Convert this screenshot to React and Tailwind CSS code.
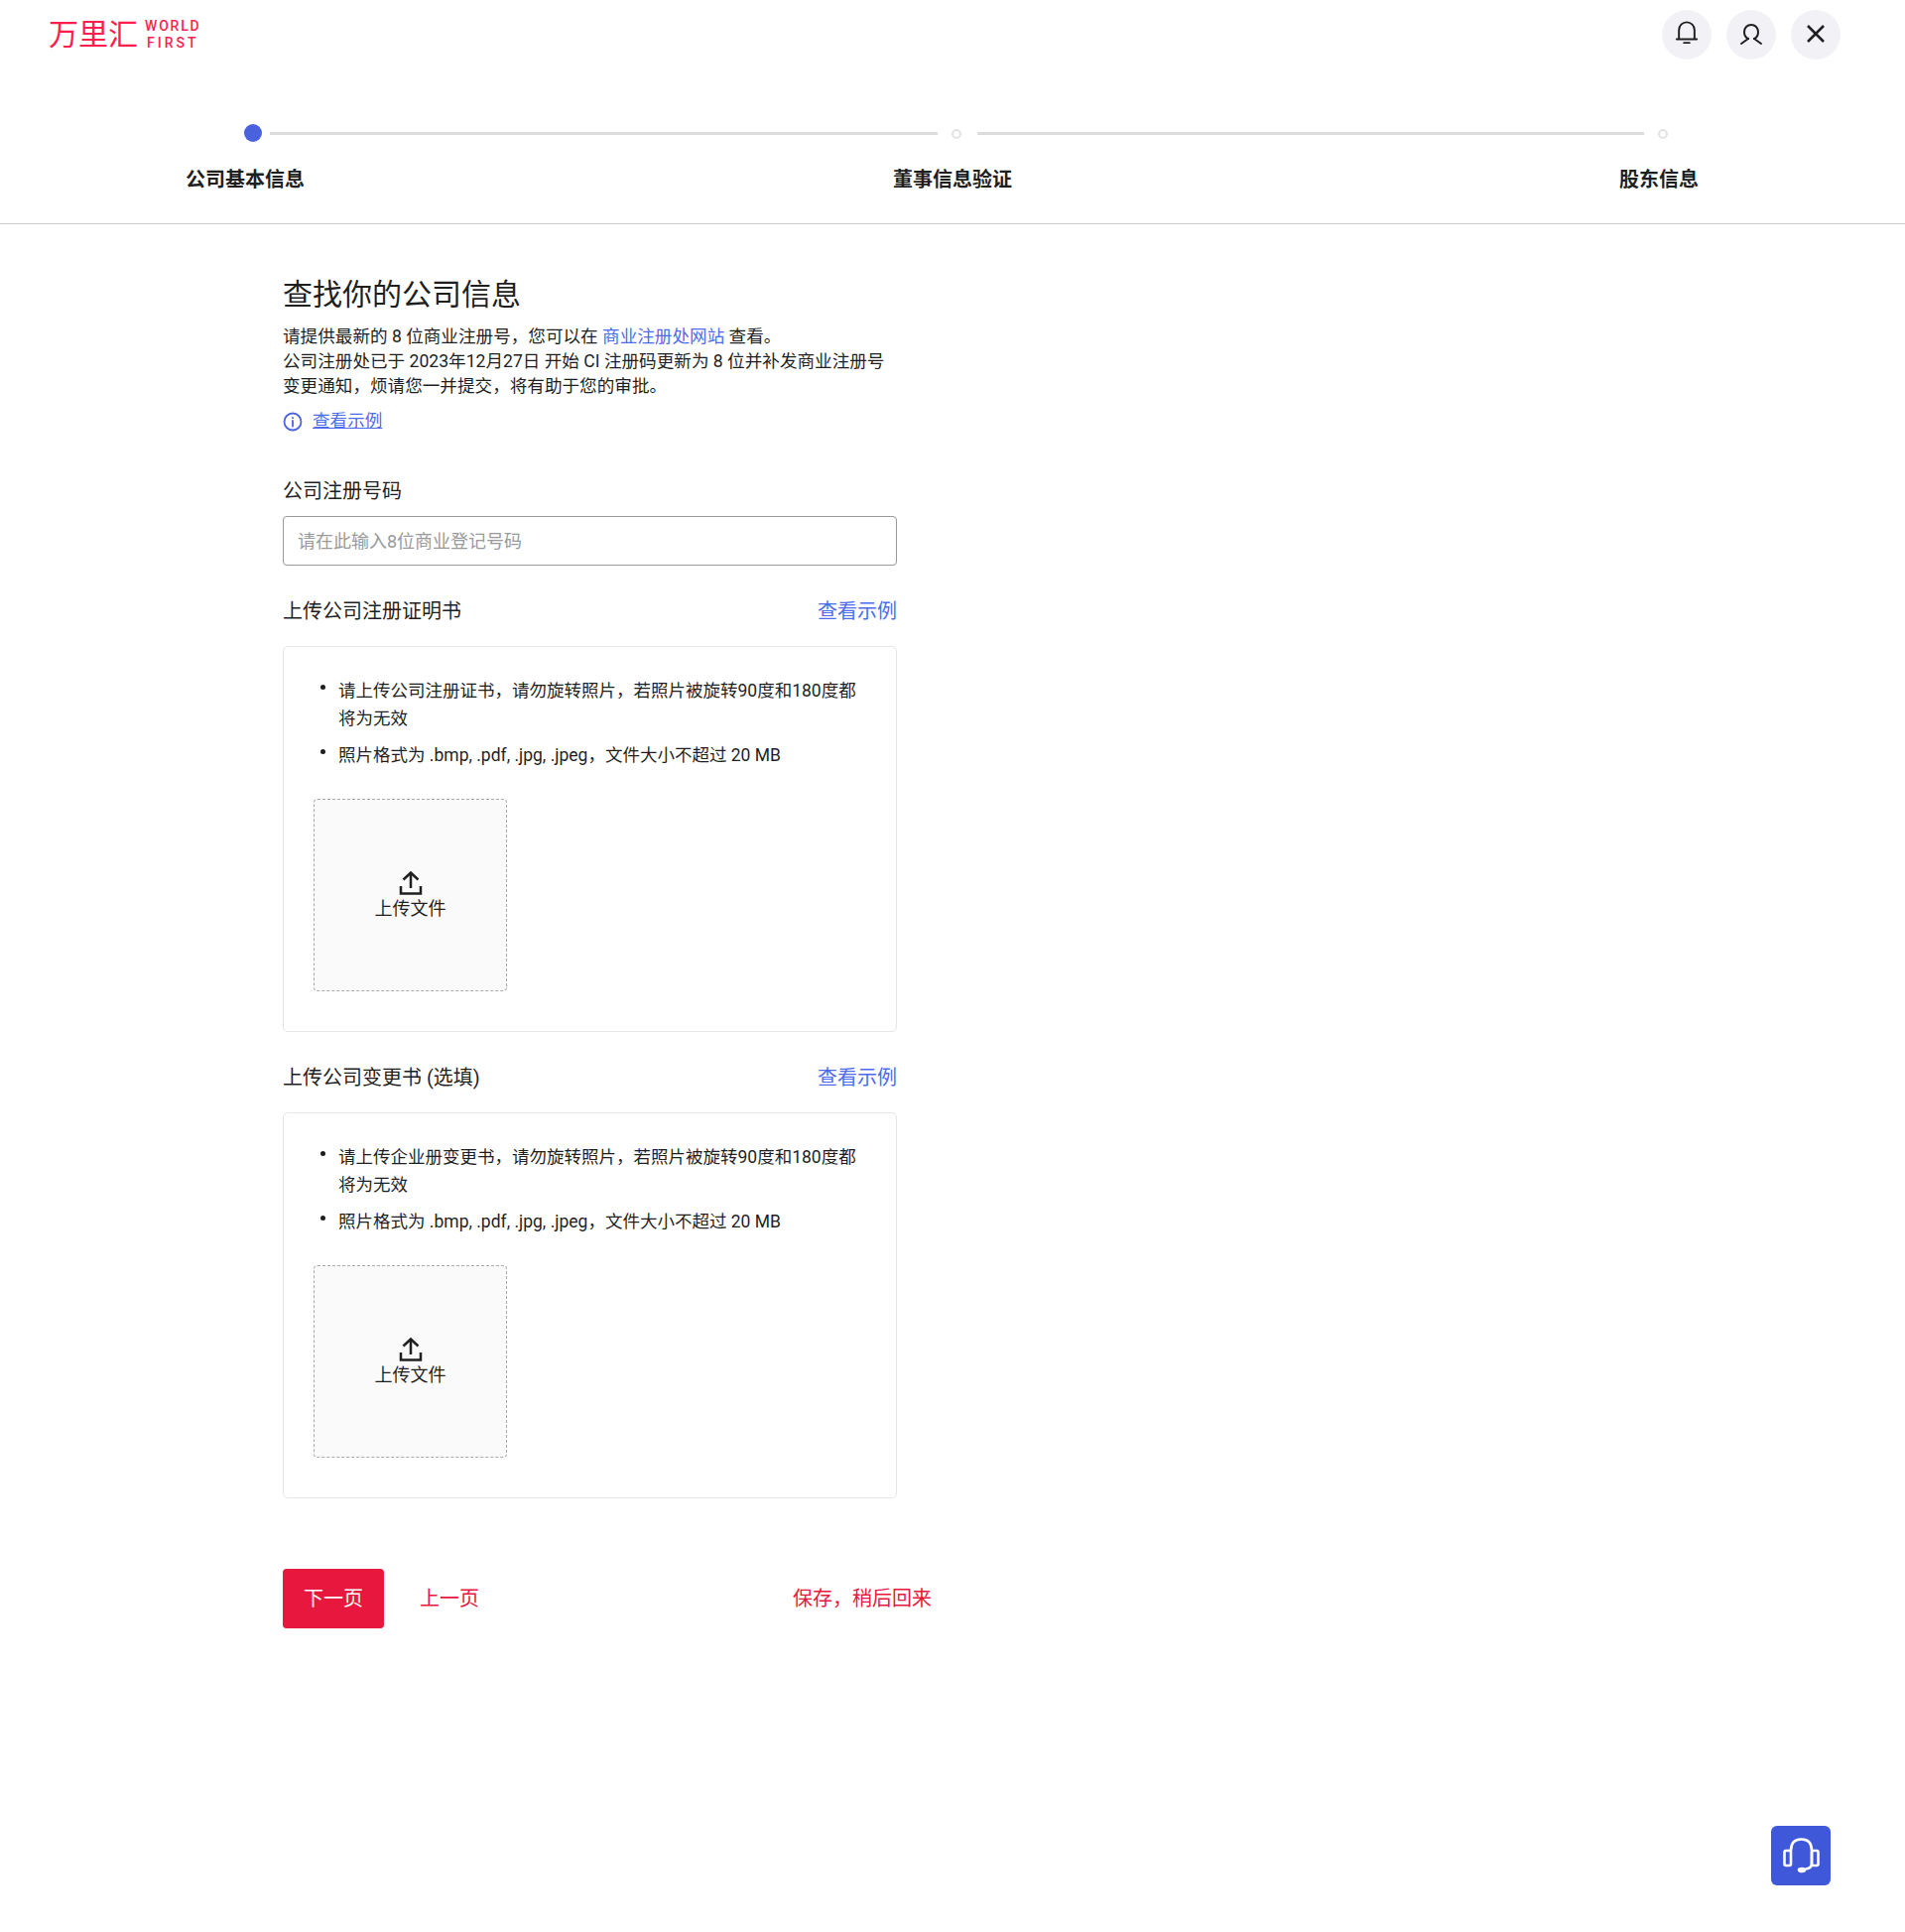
const FONT = "font-['Roboto','Noto_Sans_CJK_SC',sans-serif]";

function BellIcon() {
  return (
    <svg className="mb-[4px]" width="24" height="26" viewBox="0 0 26 28" fill="none" stroke="#1f1f1f" strokeWidth="2.100" strokeLinecap="round" strokeLinejoin="round">
      <path d="M4.500 20V11a8.500 8.500 0 0 1 17 0v9" />
      <path d="M2 21h22" />
      <path d="M10 25h6" />
    </svg>
  );
}

function UserIcon() {
  return (
    <svg width="24" height="24" viewBox="0 0 24 24" fill="none" stroke="#1f1f1f" strokeWidth="2" strokeLinecap="round" strokeLinejoin="round">
      <path d="M9 16c-2.500-1.200-4-3.700-4-6.800C5 5 8 2 12 2s7 3 7 7.200c0 3.100-1.500 5.600-4 6.800" />
      <path d="M9 16 2 21" />
      <path d="M15 16 22 21" />
    </svg>
  );
}

function CloseIcon() {
  return (
    <svg className="mb-[2px]" width="18" height="18" viewBox="0 0 18 18" fill="none" stroke="#1f1f1f" strokeWidth="2.500">
      <path d="M1 1l16 16" />
      <path d="M17 1 1 17" />
    </svg>
  );
}

function InfoIcon() {
  return (
    <svg width="20" height="20" viewBox="0 0 20 20" fill="none" stroke="#4a63e0" strokeWidth="1.800" strokeLinecap="round">
      <circle cx="10" cy="10" r="8.500" />
      <path d="M10 9v5.500" />
      <path d="M10 5.800v.4" />
    </svg>
  );
}

function UploadIcon() {
  return (
    <svg width="26" height="26" viewBox="0 0 26 26" fill="none" stroke="#1f1f1f" strokeWidth="2.500">
      <path d="M13 18V2.500" />
      <path d="M5.500 9.500 13 2.500l7.500 7" />
      <path d="M3 16v7.500h20V16" />
    </svg>
  );
}

function HeadsetIcon() {
  return (
    <svg width="37" height="37" viewBox="0 0 37 37" fill="none" stroke="#fff" strokeWidth="2.600" strokeLinecap="round" strokeLinejoin="round">
      <path d="M8 13C8 5 12 1.500 18.500 1.500S29 5 29 13v13c0 3-2 5-6 5.500" />
      <rect x="1.500" y="13" width="6.500" height="15" rx="1.500" />
      <rect x="29" y="13" width="6.500" height="15" rx="1.500" />
      <ellipse cx="19" cy="32.500" rx="3" ry="1.500" fill="#fff" />
    </svg>
  );
}

function RoundButton({ children }) {
  return (
    <button className="flex h-[50px] w-[50px] items-center justify-center rounded-full bg-[#f2f2f6]">
      {children}
    </button>
  );
}

function UploadCard({ lines }) {
  return (
    <div className="mt-[21px] h-[389px] rounded-[5px] border border-[#e6e6e6] px-[30px] pt-[30px]">
      <ul className="flex flex-col gap-[9px] pl-[7px] text-[17.5px] leading-[28px] text-[#1f1f1f]">
        {lines.map((line) => (
          <li key={line} className="flex gap-[13px]">
            <span className="mt-[8px] h-[5px] w-[5px] shrink-0 rounded-full bg-[#1f1f1f]" />
            <span>{line}</span>
          </li>
        ))}
      </ul>
      <div className="mt-[30px] flex h-[194px] w-[195px] flex-col items-center justify-center rounded-[4px] border border-dashed border-[#aaaaaa] bg-[#fafafa]">
        <UploadIcon />
        <span className="pt-[1px] text-[18px] leading-[24px] text-[#1f1f1f]">上传文件</span>
      </div>
    </div>
  );
}

function SectionHead({ title }) {
  return (
    <div className="mt-[32px] flex items-center justify-between text-[20px] leading-[28px]">
      <span className="text-[#1f1f1f]">{title}</span>
      <a className="text-[#4f6bed]">查看示例</a>
    </div>
  );
}

export default function App() {
  return (
    <div className={`relative min-h-[1947px] bg-white ${FONT}`}>
      <header className="flex h-[70px] items-center justify-between pl-[49px] pr-[65px]">
        <div className="flex items-center gap-[7px] text-[#ff1f4f]">
          <span className="text-[30px] leading-[34px]">万里汇</span>
          <span className="flex flex-col items-center text-[14px] font-medium leading-[17px]">
            <span className="tracking-[1.800px]">WORLD</span>
            <span className="tracking-[3px]">FIRST</span>
          </span>
        </div>
        <div className="flex gap-[15px]">
          <RoundButton><BellIcon /></RoundButton>
          <RoundButton><UserIcon /></RoundButton>
          <RoundButton><CloseIcon /></RoundButton>
        </div>
      </header>

      <div className="h-[156px] border-b border-[#cccccc] pt-[55px]">
        <div className="flex items-center pl-[246px]">
          <span className="h-[18px] w-[18px] rounded-full bg-[#4a62de]" />
          <span className="ml-[8px] h-[3px] w-[673px] bg-[#dcdcdc]" />
          <span className="ml-[14px] mt-[2px] h-[10px] w-[10px] rounded-full border-2 border-[#e2e2e2]" />
          <span className="ml-[16px] h-[3px] w-[672px] bg-[#dcdcdc]" />
          <span className="ml-[14px] mt-[2px] h-[10px] w-[10px] rounded-full border-2 border-[#e2e2e2]" />
        </div>
        <div className="mt-[24px] flex pl-[187px] text-[20px] font-bold leading-[28px] text-[#1f1f1f]">
          <span>公司基本信息</span>
          <span className="ml-[593px]">董事信息验证</span>
          <span className="ml-[612px]">股东信息</span>
        </div>
      </div>

      <main className="ml-[285px] w-[619px] pt-[49px]">
        <h1 className="text-[30px] font-normal leading-[44px] text-[#1f1f1f]">查找你的公司信息</h1>
        <p className="mt-[8px] text-[17.6px] leading-[25px] text-[#1f1f1f]">
          请提供最新的 8 位商业注册号，您可以在 <a className="text-[#4f6bed]">商业注册处网站</a> 查看。<br />
          公司注册处已于 2023年12月27日 开始 CI 注册码更新为 8 位并补发商业注册号变更通知，烦请您一并提交，将有助于您的审批。
        </p>
        <div className="mt-[10px] flex items-center gap-[10px]">
          <InfoIcon />
          <a className="text-[17.6px] leading-[25px] text-[#4f6bed] underline">查看示例</a>
        </div>

        <label className="mt-[44px] block text-[20px] leading-[28px] text-[#1f1f1f]">公司注册号码</label>
        <input
          className="mt-[11px] h-[50px] w-full rounded-[4px] border border-[#999999] px-[14px] text-[18px] outline-none placeholder:text-[#9a9a9a]"
          placeholder="请在此输入8位商业登记号码"
        />

        <SectionHead title="上传公司注册证明书" />
        <UploadCard
          lines={[
            "请上传公司注册证书，请勿旋转照片，若照片被旋转90度和180度都将为无效",
            "照片格式为 .bmp, .pdf, .jpg, .jpeg，文件大小不超过 20 MB",
          ]}
        />

        <SectionHead title="上传公司变更书 (选填)" />
        <UploadCard
          lines={[
            "请上传企业册变更书，请勿旋转照片，若照片被旋转90度和180度都将为无效",
            "照片格式为 .bmp, .pdf, .jpg, .jpeg，文件大小不超过 20 MB",
          ]}
        />

        <div className="mt-[71px] flex w-[654px] items-center text-[20px] text-[#e8173e]">
          <button className="h-[60px] w-[102px] rounded-[4px] bg-[#e8173e] text-white">下一页</button>
          <a className="ml-[36px]">上一页</a>
          <a className="ml-auto">保存，稍后回来</a>
        </div>
      </main>

      <button className="fixed bottom-[47px] right-[75px] flex h-[60px] w-[60px] items-center justify-center rounded-[6px] bg-[#3f57d9]">
        <HeadsetIcon />
      </button>
    </div>
  );
}
